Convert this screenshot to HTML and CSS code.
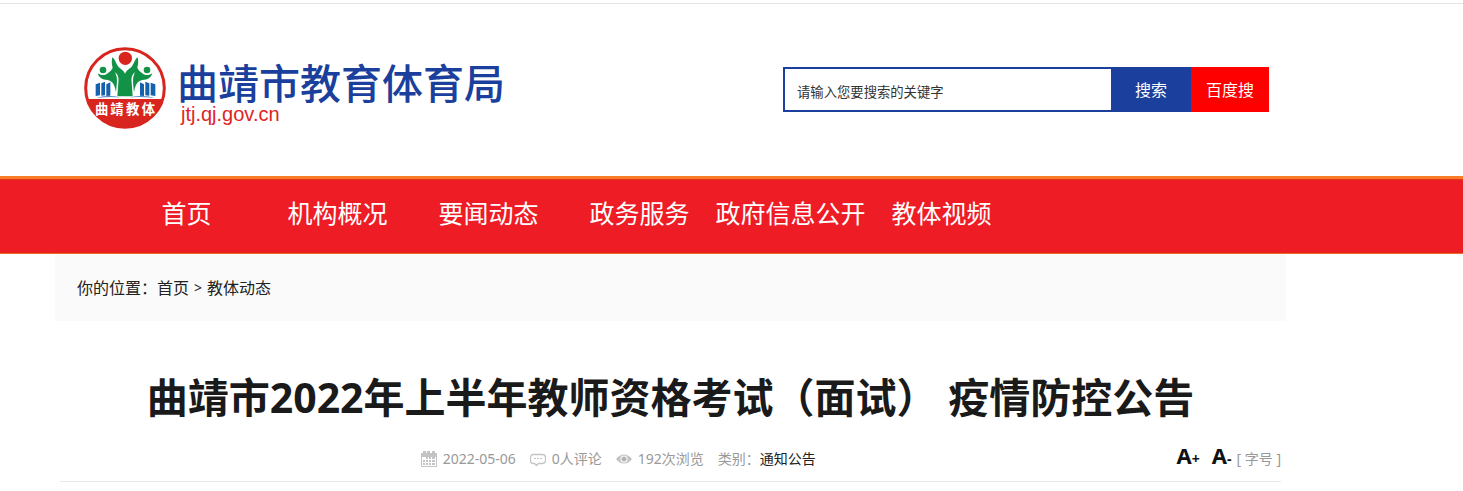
FILE: index.html
```html
<!DOCTYPE html>
<html lang="zh-CN">
<head>
<meta charset="utf-8">
<meta name="viewport" content="width=device-width, initial-scale=1">
<title>曲靖市教育体育局</title>
<link rel="stylesheet" href="styles.css">
</head>
<body>
<header class="header">
  <div class="header-inner">
    <a class="brand" href="#">
      <svg class="brand-mark" viewBox="27 34 246 248" role="img" aria-label="曲靖教体">
        <defs><clipPath id="disc"><circle cx="150" cy="158" r="120"/></clipPath></defs>
        <circle cx="150" cy="158" r="118" fill="#fff" stroke="#d8261f" stroke-width="9"/>
        <rect x="27" y="191" width="246" height="92" fill="#d8261f" clip-path="url(#disc)"/>
        <g fill="#1462ae">
          <path d="M62 147l13-5v38l-13 2zM79 144l11-5v41l-11 1zM94 147l12-6v40l-12 1z"/>
          <path d="M195 141l12 6v35l-12-1zM211 139l12 5v37l-12-1zM227 142l14 5v35l-14-2z"/>
          <path d="M64 187q36-8 72-1-32-3-72 1zM164 186q36-7 76 1-40-4-76-1z"/>
        </g>
        <g fill="#129247">
          <circle cx="84" cy="104" r="10"/>
          <circle cx="216" cy="104" r="10"/>
          <path d="M68 114c14 10 26 4 36-5 6-5 9-12 12-18 4 12 5 24 9 34 2 12 0 24-2 46-4-26-12-34-25-37-16-1-26-6-30-20z"/>
          <path d="M232 114c-14 10-26 4-36-5-6-5-9-12-12-18-4 12-5 24-9 34-2 12 0 24 2 46 4-26 12-34 25-37 16-1 26-6 30-20z"/>
          <path d="M112 66c8 4 10 18 18 28 8 7 17 12 20 21 3-9 12-14 20-21 8-10 10-24 18-28 5 22-2 39-14 51-5 7-5 14-4 25l3 41h-46l3-41c1-11 1-18-4-25-12-12-19-29-14-51z"/>
        </g>
        <circle cx="151" cy="69" r="20" fill="#d8261f"/>
        <text class="brand-mark-text" x="60 106 153 200" y="237">曲靖教体</text>
      </svg>
      <span class="brand-words">
        <span class="brand-name">曲靖市教育体育局</span>
        <span class="brand-url">jtj.qj.gov.cn</span>
      </span>
    </a>
    <form class="search">
      <input class="search-input" type="text" aria-label="搜索关键字" placeholder="请输入您要搜索的关键字">
      <button class="search-button" type="button">搜索</button>
      <button class="search-button search-baidu" type="button">百度搜</button>
    </form>
  </div>
</header>
<nav class="nav">
  <ul class="nav-list">
    <li><a href="#">首页</a></li>
    <li><a href="#">机构概况</a></li>
    <li><a href="#">要闻动态</a></li>
    <li><a href="#">政务服务</a></li>
    <li><a href="#">政府信息公开</a></li>
    <li><a href="#">教体视频</a></li>
  </ul>
</nav>
<main class="main">
  <div class="crumbs"><span>你的位置：</span><a href="#">首页</a><span class="crumbs-sep">&gt;</span><a href="#">教体动态</a></div>
  <article class="article">
    <h1 class="title">曲靖市2022年上半年教师资格考试（面试） 疫情防控公告</h1>
    <div class="meta">
      <div class="meta-info">
        <span class="meta-item">
          <svg class="icon" viewBox="0 0 16 16" aria-hidden="true"><path fill="#c4c4c4" d="M0 2h2V0h3v2h1V0h3v2h2V0h3v2h2v14H0z"/><path fill="#fff" d="M1 6h14v9H1z"/><path fill="#c4c4c4" d="M5 6h2v2H5zM8 6h2v2H8zM11 6h3v2h-3zM2 9h2v2H2zM5 9h2v2H5zM8 9h2v2H8zM11 9h3v2h-3zM2 12h2v2H2zM5 12h2v2H5zM8 12h2v2H8zM11 12h3v2h-3z"/></svg>
          2022-05-06
        </span>
        <span class="meta-item">
          <svg class="icon" viewBox="0 0 16 16" aria-hidden="true"><path fill="none" stroke="#c4c4c4" stroke-width="1.300" d="M3.500 3.500h9q3 0 3 3v3q0 3-3 3H8.500l-2 2-2-2h-1q-3 0-3-3v-3q0-3 3-3z"/><path fill="#c4c4c4" d="M4 7h2v1H4zM7 7h2v1H7zM10 7h2v1h-2z"/></svg>
          0人评论
        </span>
        <span class="meta-item">
          <svg class="icon" viewBox="0 0 16 16" aria-hidden="true"><path fill="#c4c4c4" d="M0 8q3.500-4.500 8-4.500T16 8q-3.500 4.500-8 4.500T0 8z"/><circle cx="8" cy="8" r="3.500" fill="#fff"/><circle cx="8" cy="8" r="2.500" fill="#b4b4b4"/></svg>
          192次浏览
        </span>
        <span class="meta-item meta-category">类别：<a href="#">通知公告</a></span>
      </div>
      <div class="font-size">
        <button type="button" class="size-button" aria-label="放大字号">A<span class="size-sign">+</span></button>
        <button type="button" class="size-button" aria-label="缩小字号">A<span class="size-sign">-</span></button>
        <span>[ 字号 ]</span>
      </div>
    </div>
  </article>
</main>
</body>
</html>
```
FILE: styles.css
```css
* { box-sizing: border-box; }

body {
  margin: 3px 0 0;
  background: #fff;
  color: #1a1a1a;
  font-family: "Noto Sans", "Noto Sans CJK SC", sans-serif;
  font-size: 16px;
  line-height: 24px;
}

a { color: inherit; text-decoration: none; }

button {
  margin: 0;
  border: 0;
  font-family: inherit;
  cursor: pointer;
}

.header { border-top: 1px solid #e4e4e4; }

.header-inner {
  display: flex;
  justify-content: space-between;
  align-items: flex-start;
  max-width: 1286px;
  padding: 42px 17px 46px 84px;
}

.brand { display: flex; gap: 11px; }
.brand-mark { width: 82px; height: 84px; }
.brand-mark-text {
  fill: #fff;
  font-family: "Noto Sans CJK SC", sans-serif;
  font-size: 40px;
  font-weight: 700;
}
.brand-words { display: flex; flex-direction: column; padding-top: 14px; }
.brand-name {
  color: #1b3f9c;
  font-family: "Noto Sans CJK SC", sans-serif;
  font-size: 41px;
  font-weight: 500;
  line-height: 42px;
}
.brand-url {
  padding: 2px 0 0 4px;
  color: #e0241f;
  font-family: "Liberation Sans", sans-serif;
  font-size: 20px;
  line-height: 20px;
}

.search { display: flex; height: 45px; margin-top: 21px; }
.search-input {
  width: 328px;
  padding: 4px 12px 0;
  border: 2px solid #1b3f9c;
  border-right: 0;
  background: #fff;
  font-family: inherit;
}
.search-input::placeholder { color: #333; opacity: 1; }
.search-button {
  width: 80px;
  padding: 0 0 2px;
  background: #1b3f9c;
  color: #fff;
  font-size: 16px;
}
.search-baidu { width: 78px; background: #f00; }

.nav {
  border-top: 3px solid #fa7c2b;
  border-bottom: 1px solid #f0682c;
  background: #ee1c25;
  box-shadow: inset 0 1px #dd3a16, inset 0 -1px #e2231a;
}
.nav-list {
  display: flex;
  margin: 0;
  padding: 0 0 0 111px;
  list-style: none;
}
.nav-list a {
  display: block;
  width: 151px;
  padding: 14px 0 20px;
  color: #fff;
  font-size: 25px;
  line-height: 40px;
  text-align: center;
  white-space: nowrap;
}

.main { max-width: 1231px; margin-left: 55px; }
.crumbs {
  display: flex;
  padding: 22px 22px 21px;
  background: #fafafa;
  color: #222;
}
.crumbs-sep { padding: 0 5px; font-size: 14px; }

.article { padding: 0 5px; }
.title {
  margin: 0;
  padding: 46px 0 18px;
  color: #1a1a1a;
  font-size: 41px;
  font-weight: 700;
  line-height: 60px;
  text-align: center;
}
.meta {
  display: flex;
  align-items: center;
  padding-bottom: 8px;
  border-bottom: 1px solid #e8e8e8;
  color: #999;
  font-size: 14px;
}
.meta-info { display: flex; flex: 1; justify-content: center; gap: 14px; }
.meta-item { display: flex; align-items: center; gap: 6px; }
.meta-category { gap: 0; }
.meta-category a { color: #222; }
.icon { width: 16px; height: 16px; }
.font-size { display: flex; justify-content: flex-end; align-items: center; }
.size-button {
  margin-right: 12px;
  padding: 0 0 4px;
  background: none;
  color: #111;
  font-size: 22px;
  font-weight: 700;
  line-height: 20px;
}
.size-button + .size-button { margin-right: 5px; }
.size-sign { font-size: 14px; }
```
